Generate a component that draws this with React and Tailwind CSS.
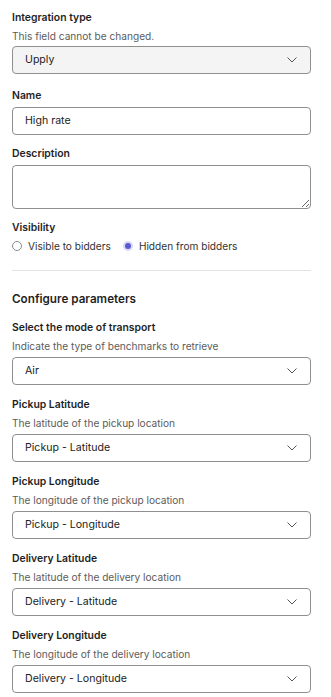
import { useState } from 'react';

const Chevron = () => (
  <svg width="10" height="6" viewBox="0 0 10 6" fill="none" className="shrink-0">
    <polyline points="0.5,0.5 5,5 9.5,0.5" stroke="#555" strokeWidth="1" />
  </svg>
);

const Select = ({ value, disabled }) => (
  <div
    className={
      'h-[28px] w-full rounded-[4px] border border-[#8f8f8f] pl-[12px] pr-[13px] flex items-center justify-between text-[10.6px] text-[#222] ' +
      (disabled ? 'bg-[#f4f4f4]' : 'bg-white')
    }
  >
    <span>{value}</span>
    <Chevron />
  </div>
);

const Label = ({ children }) => (
  <div className="text-[10.4px] leading-[18px] font-semibold text-[#1f1f1f]">{children}</div>
);

const Hint = ({ children }) => (
  <div className="text-[10.15px] leading-[18px] text-[#5c5c5c]">{children}</div>
);

const Radio = ({ checked, label, onClick }) => (
  <label className="flex items-center gap-[6px] cursor-pointer" onClick={onClick}>
    {checked ? (
      <span className="w-[10px] h-[10px] rounded-full bg-[#d9d9f5] flex items-center justify-center">
        <span className="w-[6px] h-[6px] rounded-full bg-[#5a5ad0]" />
      </span>
    ) : (
      <span className="w-[10px] h-[10px] rounded-full border border-[#8a8a8a] bg-white" />
    )}
    <span>{label}</span>
  </label>
);

const params = [
  { label: 'Select the mode of transport', hint: 'Indicate the type of benchmarks to retrieve', value: 'Air' },
  { label: 'Pickup Latitude', hint: 'The latitude of the pickup location', value: 'Pickup - Latitude' },
  { label: 'Pickup Longitude', hint: 'The longitude of the pickup location', value: 'Pickup - Longitude' },
  { label: 'Delivery Latitude', hint: 'The latitude of the delivery location', value: 'Delivery - Latitude' },
  { label: 'Delivery Longitude', hint: 'The longitude of the delivery location', value: 'Delivery - Longitude' },
];

export default function App() {
  const [visibility, setVisibility] = useState('hidden');

  return (
    <div className="bg-white min-h-[697px] pl-[12px] pr-[20px] pt-[9px] pb-4 font-['Inter',sans-serif] text-[#222]">
      <div>
        <Label>Integration type</Label>
        <Hint>This field cannot be changed.</Hint>
        <div className="mt-[1px]">
          <Select value="Upply" disabled />
        </div>
      </div>

      <div className="mt-[13px]">
        <Label>Name</Label>
        <div className="mt-[2px] h-[28px] w-full rounded-[4px] border border-[#8f8f8f] pl-[12px] flex items-center text-[10.6px] text-[#222]">
          High rate
        </div>
      </div>

      <div className="mt-[10px]">
        <Label>Description</Label>
        <textarea className="mt-[2px] block h-[44px] w-full rounded-[4px] border border-[#8f8f8f] px-[12px] py-[6px] text-[10.6px]" />
      </div>

      <div className="mt-[10px]">
        <Label>Visibility</Label>
        <div className="flex items-center gap-[12px] text-[10.15px] leading-[18px] text-[#333]">
          <Radio label="Visible to bidders" checked={visibility === 'visible'} onClick={() => setVisibility('visible')} />
          <Radio label="Hidden from bidders" checked={visibility === 'hidden'} onClick={() => setVisibility('hidden')} />
        </div>
      </div>

      <div className="mt-[15px] h-px bg-[#e3e3e3]" />

      <div className="mt-[18px] text-[11.7px] leading-[20px] font-semibold text-[#1f1f1f]">Configure parameters</div>

      {params.map((p, i) => (
        <div key={p.label} className={i === 0 ? 'mt-[10px]' : 'mt-[11px]'}>
          <Label>{p.label}</Label>
          <Hint>{p.hint}</Hint>
          <div className="mt-[2px]">
            <Select value={p.value} />
          </div>
        </div>
      ))}
    </div>
  );
}
